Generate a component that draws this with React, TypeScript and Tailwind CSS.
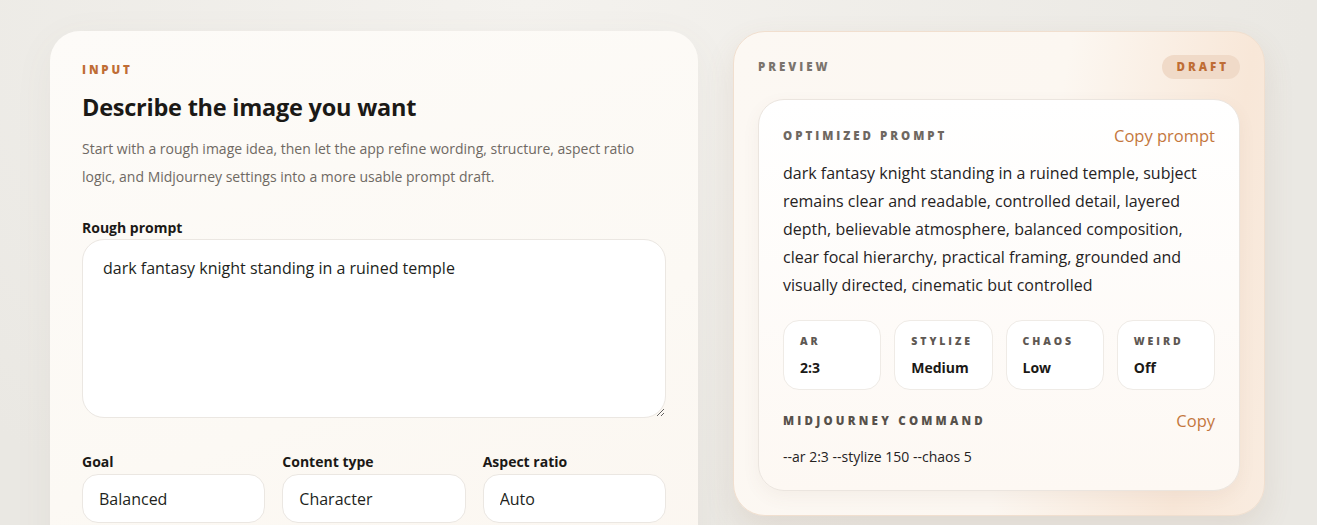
const stats = [
  { label: "AR", value: "2:3" },
  { label: "Stylize", value: "Medium" },
  { label: "Chaos", value: "Low" },
  { label: "Weird", value: "Off" },
];

const selects = [
  { label: "Goal", value: "Balanced", options: ["Balanced", "Cinematic", "Stylized"] },
  { label: "Content type", value: "Character", options: ["Character", "Environment", "Product"] },
  { label: "Aspect ratio", value: "Auto", options: ["Auto", "1:1", "2:3", "16:9"] },
];

const optimized =
  "dark fantasy knight standing in a ruined temple, subject remains clear and readable, controlled detail, layered depth, believable atmosphere, balanced composition, clear focal hierarchy, practical framing, grounded and visually directed, cinematic but controlled";

export default function App() {
  return (
    <div className="min-h-[525px] overflow-hidden bg-[radial-gradient(ellipse_at_40%_0%,#f4f2ee_0%,#eae8e3_70%)] font-['Open_Sans','Noto_Sans',sans-serif] text-[#1c1a17]">
      <div className="grid grid-cols-[648px_1fr] gap-[35px] pl-[50px] pr-[52px] pt-[31px]">
        {/* Input */}
        <section className="h-[560px] rounded-[30px] bg-[linear-gradient(160deg,#fdfbf8_0%,#fcf9f4_60%,#fbf6f0_100%)] px-8 pt-[31px] shadow-[0_10px_40px_rgba(120,100,80,0.06)]">
          <p className="text-[11.5px] font-extrabold uppercase leading-[16px] tracking-[0.25em] text-[#bf6d35]">Input</p>
          <h1 className="mt-[13px] text-[23.5px] font-bold leading-[32px] tracking-[-0.01em] text-[#1b1916]">
            Describe the image you want
          </h1>
          <p className="mt-[12px] text-[14px] leading-[28px] text-[#6f6963]">
            Start with a rough image idea, then let the app refine wording, structure, aspect ratio logic, and Midjourney
            settings into a more usable prompt draft.
          </p>

          <label className="mt-[27px] block">
            <span className="block text-[14px] font-bold leading-[20px] text-[#1b1916]">Rough prompt</span>
            <textarea
              readOnly
              defaultValue="dark fantasy knight standing in a ruined temple"
              className="mt-[1px] block h-[179px] w-full resize-y rounded-[22px] border border-[#ebe7e2] bg-white px-5 py-[16px] text-[16px] leading-[24px] text-[#221f1c] outline-none"
            />
          </label>

          <div className="mt-[34px] grid grid-cols-3 gap-[17px]">
            {selects.map((s) => (
              <label key={s.label} className="block">
                <span className="block text-[14px] font-bold leading-[20px] text-[#1b1916]">{s.label}</span>
                <select
                  defaultValue={s.value}
                  className="mt-[2px] block h-[49px] w-full appearance-none rounded-[16px] border border-[#ebe7e2] bg-white px-4 text-[16px] text-[#221f1c] outline-none"
                >
                  {s.options.map((o) => (
                    <option key={o}>{o}</option>
                  ))}
                </select>
              </label>
            ))}
          </div>
        </section>

        {/* Preview */}
        <section className="h-[485px] rounded-[32px] border border-[#f1dfcf] bg-[linear-gradient(100deg,#fcf8f3_0%,#fcf7f1_55%,#f8e7d8_85%,#f9ece0_100%)] px-6 pt-[23px] shadow-[0_12px_30px_rgba(150,110,70,0.12)]">
          <div className="flex items-center justify-between">
            <p className="text-[11.5px] font-extrabold uppercase tracking-[0.26em] text-[#7b746d]">Preview</p>
            <span className="rounded-full bg-[#f0dac8] py-[4px] pl-[14px] pr-[11px] text-[11.5px] font-extrabold uppercase leading-[16px] tracking-[0.26em] text-[#bf6d35]">
              Draft
            </span>
          </div>

          <div className="mt-[20px] rounded-[26px] border border-[#ebe5df] bg-[linear-gradient(180deg,#ffffff_0%,#fdf8f3_100%)] px-6 pb-[23px] pt-[24px] shadow-[0_6px_18px_rgba(120,90,60,0.06)]">
            <div className="flex items-center justify-between">
              <p className="text-[11.5px] font-extrabold uppercase tracking-[0.26em] text-[#6f6861]">Optimized prompt</p>
              <button className="text-[16.5px] leading-[24px] text-[#c4773d]">Copy prompt</button>
            </div>
            <p className="mt-[11px] text-[16px] leading-[28px] text-[#26231f]">{optimized}</p>

            <div className="mt-[21px] grid grid-cols-4 gap-[13px]">
              {stats.map((s) => (
                <div key={s.label} className="h-[70px] rounded-[16px] border border-[#efebe6] bg-white px-4 pt-[13px]">
                  <p className="text-[10.5px] font-extrabold uppercase leading-[14px] tracking-[0.28em] text-[#5e5853]">{s.label}</p>
                  <p className="mt-[10px] text-[14px] font-bold leading-[20px] text-[#1b1916]">{s.value}</p>
                </div>
              ))}
            </div>

            <div className="mt-[19px] flex items-center justify-between">
              <p className="text-[11.5px] font-extrabold uppercase tracking-[0.28em] text-[#57514b]">Midjourney command</p>
              <button className="text-[16.5px] leading-[24px] text-[#c4773d]">Copy</button>
            </div>
            <p className="mt-[14px] text-[14px] leading-[20px] text-[#26231f]">--ar 2:3 --stylize 150 --chaos 5</p>
          </div>
        </section>
      </div>
    </div>
  );
}
